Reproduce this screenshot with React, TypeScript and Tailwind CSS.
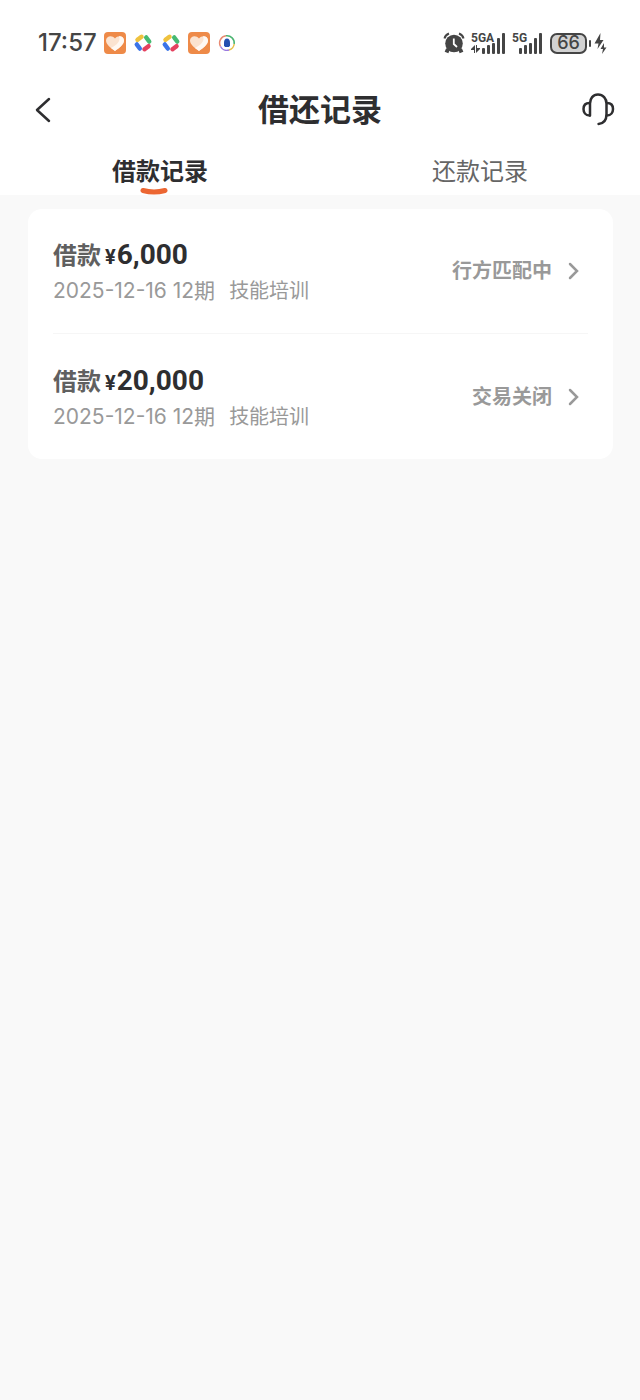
import React, { useState } from "react";

const tabs = ["借款记录", "还款记录"];

const records = [
  {
    id: 1,
    amount: "6,000",
    date: "2025-12-16",
    term: "12期",
    purpose: "技能培训",
    status: "行方匹配中",
  },
  {
    id: 2,
    amount: "20,000",
    date: "2025-12-16",
    term: "12期",
    purpose: "技能培训",
    status: "交易关闭",
  },
];

//orange app with a heart
const HeartAppIcon = () => (
  <svg width="22" height="22" viewBox="0 0 22 22" aria-hidden="true">
    <rect width="22" height="22" rx="4" fill="#ee8a48" />
    <path
      d="M11 19C7 16 2 12.500 2 8.500C2 4 8 2.500 11 6.500C14 2.500 20 4 20 8.500C20 12.500 15 16 11 19Z"
      fill="#fbe3d0"
    />
    <path d="M11 19C15 16 20 12.500 20 8.500C20 5.500 17.500 4 15 4.300C17 9 13 13 7 16Z" fill="#fff8f2" />
  </svg>
);

//four coloured blades
const PinwheelIcon = () => (
  <svg width="20" height="20" viewBox="0 0 20 20" fill="none" strokeWidth="4.500" strokeLinecap="round" aria-hidden="true">
    <path d="M4.500 6.800L8.500 3.800" stroke="#efc23e" />
    <path d="M13.200 4.500L16.200 8.500" stroke="#46ba72" />
    <path d="M15.500 13.200L11.500 16.200" stroke="#e5415f" />
    <path d="M3.800 11.500L6.800 15.500" stroke="#3b74e8" />
  </svg>
);

const BellRingIcon = () => (
  <svg width="18" height="18" viewBox="0 0 18 18" fill="none" aria-hidden="true">
    <path d="M2.500 12.500A7.300 7.300 0 0 1 8 1.800" stroke="#e98a72" strokeWidth="1.500" />
    <path d="M8 1.800A7.300 7.300 0 0 1 16.200 10" stroke="#4cb572" strokeWidth="1.500" />
    <path d="M16.200 10A7.300 7.300 0 0 1 11 16" stroke="#e8c04a" strokeWidth="1.500" />
    <path d="M11 16A7.300 7.300 0 0 1 2.500 12.500" stroke="#9b7be0" strokeWidth="1.500" />
    <path d="M9 4.500C11 4.500 12 6.500 12 8.500V11.500L11 13H7L6 11.500V8.500C6 6.500 7 4.500 9 4.500Z" fill="#2450b0" />
  </svg>
);

const AlarmIcon = () => (
  <svg width="22" height="22" viewBox="0 0 22 22" fill="none" aria-hidden="true">
    <circle cx="11" cy="11.500" r="8.800" fill="#454545" />
    <path d="M1.500 6.500C2 4 3.500 2.500 6 1.500M20.500 6.500C20 4 18.500 2.500 16 1.500" stroke="#454545" strokeWidth="2" />
    <path d="M5 17L3.500 20.500M17 17L18.500 20.500" stroke="#454545" strokeWidth="4" />
    <path d="M10.800 6.500V12L14 15" stroke="#fff" strokeWidth="1.800" />
  </svg>
);

//signal bars with the network name over them
const SignalIcon = ({ label, data }: { label: string; data?: boolean }) => (
  <svg
    width={data ? 35 : 31}
    height="24"
    viewBox={data ? "0 0 35 24" : "4 0 31 24"}
    fill="#454545"
    role="img"
    aria-label={label}
  >
    <text x={data ? 0 : 4} y="11" className="font-['Roboto',sans-serif] text-xs font-bold">
      {label}
    </text>
    {data && <path d="M0 18L4 14V22H3V19H0ZM9 18L5 22V14H6V17H9Z" />}
    <rect x="11" y="17" width="3" height="6" rx="1" />
    <rect x="16" y="14" width="3" height="9" rx="1" />
    <rect x="21" y="12" width="3" height="11" rx="1" />
    <rect x="26" y="7" width="3" height="16" rx="1" />
    <rect x="31" y="2" width="3" height="21" rx="1" />
  </svg>
);

const StatusBar = () => (
  <div className="flex h-[86px] items-center justify-between pl-[38px] pr-[33px] text-[#454545]">
    <div className="flex items-center gap-[7px]">
      <span className="text-2xl font-medium">17:57</span>
      <div className="flex items-center gap-[6px]">
        <HeartAppIcon />
        <div className="flex gap-2 px-px">
          <PinwheelIcon />
          <PinwheelIcon />
        </div>
        <HeartAppIcon />
        <div className="pl-[2px]">
          <BellRingIcon />
        </div>
      </div>
    </div>
    <div className="flex items-center gap-[6px]">
      <AlarmIcon />
      <SignalIcon label="5GA" data />
      <SignalIcon label="5G" />
      <div className="flex items-center gap-[2px] pl-px">
        <div className="flex h-[21px] w-[37px] items-center justify-center rounded-[7px] border-2 border-[#454545] bg-[#d2d2d2] text-lg font-medium leading-none">
          66
        </div>
        <div className="h-[7px] w-[2px] rounded-sm bg-[#454545]" />
        <svg width="14" height="22" viewBox="0 0 14 22" fill="#454545" aria-hidden="true">
          <path d="M7.500 1L1.500 11.500H5.500L4.500 17L10.500 8H7Z" />
          <path d="M11 11L7.500 17H10L9 22L13.500 15.500H11Z" />
        </svg>
      </div>
    </div>
  </div>
);

const App = () => {
  const [activeTab, setActiveTab] = useState(0);

  return (
    <div className="min-h-screen bg-[#f9f9f9] font-['Inter','Noto_Sans_CJK_SC',sans-serif]">
      <header className="bg-white">
        <StatusBar />
        {/* title bar */}
        <div className="flex h-[48px] items-center justify-between px-6 text-[#2e2e30]">
          <button type="button" aria-label="返回" className="flex w-9 justify-start">
            <svg width="36" height="32" viewBox="0 0 36 32" fill="none" stroke="currentColor" strokeWidth="2.500">
              <path d="M25 5L13 16L25 27" strokeLinecap="round" strokeLinejoin="round" />
            </svg>
          </button>
          <h1 className="text-[31px] font-bold leading-[48px]">借还记录</h1>
          <button type="button" aria-label="客服" className="flex w-9 justify-end">
            <svg
              width="36"
              height="36"
              viewBox="0 0 36 36"
              fill="none"
              stroke="currentColor"
              strokeWidth="2.500"
              strokeLinecap="round"
            >
              <path d="M10 23.500V11.500C10 6.500 13 2.500 18 2.500C23 2.500 26.500 6.500 26.500 11.500V22C26.500 28 23.500 31.500 18.500 32" />
              <path d="M9.500 11C5.500 11 3.500 13.500 3.500 17C3.500 20.500 5.500 23.500 9.500 23.500" />
              <path d="M27 11C31 11 33 13.500 33 17C33 20.500 31 23.500 27 23.500" />
            </svg>
          </button>
        </div>
        {/* tabs */}
        <div role="tablist" className="flex h-[61px] pt-5">
          {tabs.map((tab, index) => (
            <button
              key={tab}
              type="button"
              role="tab"
              aria-selected={activeTab === index}
              onClick={() => setActiveTab(index)}
              className={
                activeTab === index
                  ? "relative h-9 flex-1 text-2xl font-bold text-[#2e2e30]"
                  : "relative h-9 flex-1 text-2xl text-[#666666]"
              }
            >
              {tab}
              {activeTab === index && (
                <svg
                  className="absolute left-1/2 top-8 -ml-5"
                  width="28"
                  height="10"
                  viewBox="0 0 28 10"
                  fill="none"
                  aria-hidden="true"
                >
                  <path d="M3 4.500Q14 7.500 25 4.500" stroke="#ec6632" strokeWidth="5" strokeLinecap="round" />
                </svg>
              )}
            </button>
          ))}
        </div>
      </header>

      {/* record list */}
      <main className="pb-8 pl-7 pr-[27px] pt-[14px]">
        <ul className="divide-y divide-[#f6f6f6] rounded-[14px] bg-white px-[25px]">
          {records.map((record) => (
            <li key={record.id} className="h-[125px]">
              <a href="#" className="flex h-full items-center justify-between pr-1">
                <div className="pt-1">
                  <div className="flex items-baseline whitespace-nowrap">
                    <span className="text-2xl font-bold leading-[34px] text-[#606060]">借款</span>
                    <span className="pl-1 pr-px font-['Roboto',sans-serif] text-xl font-bold leading-[34px] text-[#2e2e30]">
                      ¥
                    </span>
                    <span className="font-['Roboto',sans-serif] text-[28px] font-bold leading-[34px] text-[#2e2e30]">
                      {record.amount}
                    </span>
                  </div>
                  <div className="flex gap-[14px] whitespace-nowrap text-[#999999]">
                    <span className="text-[21px] leading-[34px]">
                      {record.date} {record.term}
                    </span>
                    <span className="text-xl leading-[34px]">{record.purpose}</span>
                  </div>
                </div>
                <div className="flex items-center gap-[10px] text-[#999999]">
                  <span className="text-xl font-bold">{record.status}</span>
                  <svg width="22" height="20" viewBox="0 0 22 20" fill="none" aria-hidden="true">
                    <path d="M8 3L15 10L8 17" stroke="currentColor" strokeWidth="2.500" strokeLinecap="round" />
                  </svg>
                </div>
              </a>
            </li>
          ))}
        </ul>
      </main>
    </div>
  );
};

export default App;
